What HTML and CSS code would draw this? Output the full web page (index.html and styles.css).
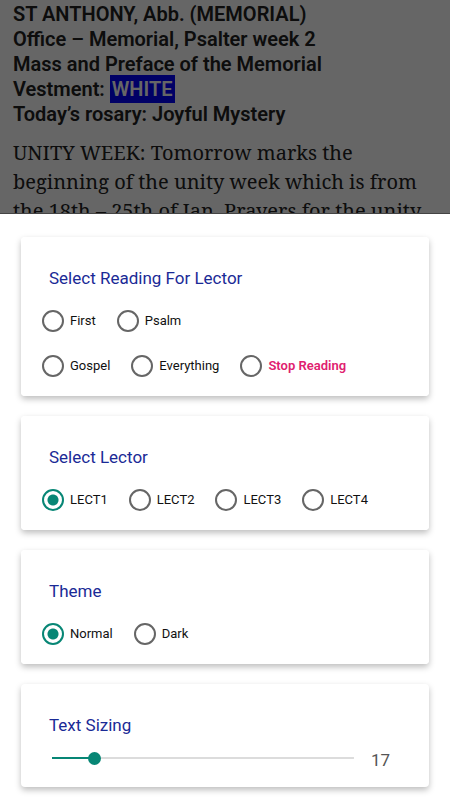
FILE: index.html
```html
<!DOCTYPE html>
<html lang="en">
<head>
  <meta charset="UTF-8">
  <meta name="viewport" content="width=device-width, initial-scale=1.0">
  <title>Daily Readings</title>
  <link rel="stylesheet" href="styles.css">
</head>
<body>

  <!-- Page behind the sheet -->
  <main class="reader">
    <div class="day-info">
      ST ANTHONY, Abb. (MEMORIAL)<br>
      Office – Memorial, Psalter week 2<br>
      Mass and Preface of the Memorial<br>
      Vestment: <span class="vestment">WHITE</span><br>
      Today’s rosary: Joyful Mystery
    </div>
    <p class="reading">UNITY WEEK: Tomorrow marks the beginning of the unity week which is from the 18th – 25th of Jan. Prayers for the unity</p>
    <div class="scrim"></div>
  </main>

  <!-- Settings sheet -->
  <form class="sheet">
    <fieldset class="card">
      <legend class="title">Select Reading For Lector</legend>
      <div class="options">
        <label class="option"><input type="radio" name="reading" class="radio">First</label>
        <label class="option"><input type="radio" name="reading" class="radio">Psalm</label>
      </div>
      <div class="options">
        <label class="option"><input type="radio" name="reading" class="radio">Gospel</label>
        <label class="option"><input type="radio" name="reading" class="radio">Everything</label>
        <label class="option stop"><input type="radio" name="reading" class="radio">Stop Reading</label>
      </div>
    </fieldset>

    <fieldset class="card">
      <legend class="title">Select Lector</legend>
      <div class="options">
        <label class="option"><input type="radio" name="lector" class="radio" checked>LECT1</label>
        <label class="option"><input type="radio" name="lector" class="radio">LECT2</label>
        <label class="option"><input type="radio" name="lector" class="radio">LECT3</label>
        <label class="option"><input type="radio" name="lector" class="radio">LECT4</label>
      </div>
    </fieldset>

    <fieldset class="card">
      <legend class="title">Theme</legend>
      <div class="options">
        <label class="option"><input type="radio" name="theme" class="radio" checked>Normal</label>
        <label class="option"><input type="radio" name="theme" class="radio">Dark</label>
      </div>
    </fieldset>

    <div class="card">
      <label class="title" for="textSize">Text Sizing</label>
      <div class="size-row">
        <input type="range" class="slider" id="textSize" min="16" max="24" step="1" value="17">
        <output class="size-value" id="sizeValue" for="textSize">17</output>
      </div>
    </div>
  </form>

  <script>
    const slider = document.getElementById("textSize");
    const sizeValue = document.getElementById("sizeValue");

    function updateSize() {
      const percent = (slider.value - slider.min) / (slider.max - slider.min) * 100;
      slider.style.setProperty("--fill", percent + "%");
      sizeValue.textContent = slider.value;
    }

    slider.addEventListener("input", updateSize);
    updateSize();
  </script>
</body>
</html>
```
FILE: styles.css
```css
* { box-sizing: border-box; }

body {
  margin: 0;
  min-height: 100vh;
  display: flex;
  flex-direction: column;
  background: #fff;
  font-family: Roboto, sans-serif;
  color: #222;
}

/* Page behind the sheet */
.reader {
  position: relative;
  flex: 1 1 0;
  overflow: hidden;
  padding: 0 13px;
  border-bottom: 1px solid #444;
}

.day-info {
  font-size: 20px;
  line-height: 25px;
  font-weight: 600;
  padding-top: 2px;
}

.vestment {
  background: #0000ff;
  color: #fff;
  padding: 2px;
}

.reading {
  margin: 11px 0 0;
  font-family: "Noto Serif", "DejaVu Serif", serif;
  font-size: 20px;
  line-height: 29px;
}

.scrim {
  position: absolute;
  inset: 0;
  background: rgba(0, 0, 0, 0.6);
}

/* Settings sheet */
.sheet {
  display: flex;
  flex-direction: column;
  gap: 20px;
  padding: 23px 21px 13px;
  background: #fff;
}

.card {
  min-width: 0;
  margin: 0;
  border: none;
  border-radius: 4px;
  padding: 29px 21px 8px;
  background: #fff;
  box-shadow: 0 3px 6px rgba(0, 0, 0, 0.26);
}

.title {
  display: block;
  float: left;
  width: 100%;
  padding: 0 7px;
  font-size: 17px;
  line-height: 24px;
  color: #1a2a96;
}

.title + .options {
  padding-top: 8px;
}

.options {
  clear: both;
  display: flex;
  flex-wrap: wrap;
  column-gap: 21px;
}

.option {
  display: flex;
  align-items: center;
  gap: 6px;
  height: 45px;
  font-size: 13px;
  color: #111;
}

.stop {
  font-weight: 600;
  color: #e0206f;
}

.radio {
  appearance: none;
  width: 22px;
  height: 22px;
  margin: 0;
  border: 2px solid #666;
  border-radius: 50%;
}

.radio:checked {
  border-color: #078675;
  background: radial-gradient(circle, #078675 5px, transparent 6px);
}

.size-row {
  clear: both;
  display: flex;
  align-items: center;
  gap: 17px;
  height: 42px;
  padding: 0 18px 0 10px;
}

.slider {
  appearance: none;
  flex: 1;
  min-width: 0;
  height: 14px;
  margin: 0;
  background: linear-gradient(#078675, #078675) left center / var(--fill) 2px no-repeat,
    linear-gradient(#dcdcdc, #dcdcdc) center / 100% 2px no-repeat;
}

.slider::-webkit-slider-thumb {
  appearance: none;
  width: 13px;
  height: 13px;
  border-radius: 50%;
  background: #078675;
}

.size-value {
  padding-top: 4px;
  font-size: 17px;
  color: #555;
}
```
